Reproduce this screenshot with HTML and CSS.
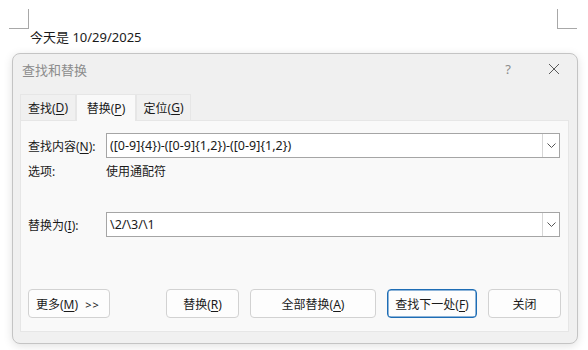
FILE: index.html
```html
<!DOCTYPE html>
<html lang="zh">
<head>
<meta charset="utf-8">
<link rel="stylesheet" href="styles.css">
</head>
<body>
<div class="doc">
  <div class="marks">
    <div class="mark mark-left"></div>
    <div class="mark mark-right"></div>
  </div>
  <div class="doc-text">今天是 10/29/2025</div>
</div>
<div class="dialog">
  <div class="titlebar">
    <span class="title">查找和替换</span>
    <span class="help">?</span>
    <span class="close">
      <svg width="12" height="12" viewBox="0 0 12 12"><path d="M1 1L11 11M11 1L1 11" stroke="#5a5a5a" stroke-width="1" fill="none"/></svg>
    </span>
  </div>
  <div class="tabs">
    <div class="tab t1">查找(<u>D</u>)</div>
    <div class="tab active">替换(<u>P</u>)</div>
    <div class="tab t3">定位(<u>G</u>)</div>
  </div>
  <div class="panel">
    <div class="row">
      <span class="label">查找内容(<u>N</u>):</span>
      <div class="combo">
        <span class="combo-text">([0-9]{4})-([0-9]{1,2})-([0-9]{1,2})</span>
        <span class="combo-btn"><svg width="9" height="5" viewBox="0 0 9 5"><path d="M0.5 0.5L4.5 4.5L8.5 0.5" stroke="#555" fill="none"/></svg></span>
      </div>
    </div>
    <div class="row opts">
      <span class="label">选项:</span>
      <span class="opt-val">使用通配符</span>
    </div>
    <div class="row replace">
      <span class="label">替换为(<u>I</u>):</span>
      <div class="combo">
        <span class="combo-text">\2/\3/\1</span>
        <span class="combo-btn"><svg width="9" height="5" viewBox="0 0 9 5"><path d="M0.5 0.5L4.5 4.5L8.5 0.5" stroke="#555" fill="none"/></svg></span>
      </div>
    </div>
    <div class="buttons">
      <button class="btn more">更多(<u>M</u>) <span class="arrows">&gt;&gt;</span></button>
      <div class="spacer"></div>
      <button class="btn w73">替换(<u>R</u>)</button>
      <button class="btn w126">全部替换(<u>A</u>)</button>
      <button class="btn w90 default">查找下一处(<u>F</u>)</button>
      <button class="btn w73">关闭</button>
    </div>
  </div>
</div>
</body>
</html>
```
FILE: styles.css
```css
* { box-sizing: border-box; }
body {
  margin: 0;
  background: #ffffff;
  font-family: "Noto Sans", "Noto Sans CJK SC", sans-serif;
  color: #1a1a1a;
  width: 588px;
  height: 350px;
  overflow: hidden;
}
u { text-decoration: underline; text-underline-offset: 2px; text-decoration-thickness: 1px; }
.doc { padding: 9px 0 0 9px; height: 53px; }
.marks { display: flex; justify-content: space-between; width: 568px; }
.mark { width: 20px; height: 20px; }
.mark-left { border-right: 1px solid #a8a8a8; border-bottom: 1px solid #a8a8a8; }
.mark-right { margin-left: auto; border-left: 1px solid #a8a8a8; border-bottom: 1px solid #a8a8a8; }
.doc-text { font-size: 13px; line-height: 18px; margin: 0 0 0 21px; position: relative; top: -1px; }
.dialog {
  margin-left: 12px;
  width: 566px;
  height: 291px;
  background: #f0f0f0;
  border: 1px solid #c4c4c4;
  border-radius: 8px;
  box-shadow: 0 2px 10px rgba(0,0,0,0.12);
  display: flex;
  flex-direction: column;
}
.titlebar {
  height: 30px;
  display: flex;
  align-items: center;
  padding: 0 0 0 9px;
  font-size: 13px;
}
.title { color: #8c8c8c; flex: 1; }
.help { color: #8c8c8c; font-size: 13px; width: 46px; text-align: center; }
.close { width: 46px; display: flex; justify-content: center; align-items: center; }
.tabs {
  display: flex;
  align-items: flex-end;
  margin: 8px 0 0 7px;
  height: 28px;
  font-size: 12px;
}
.tab {
  height: 26px;
  padding: 0;
  white-space: nowrap;
  display: flex;
  align-items: center;
  justify-content: center;
  background: #f0f0f0;
  border: 1px solid #e6e6e6;
  border-bottom: none;
}
.t1 { width: 56px; }
.tab.active {
  height: 27px;
  width: 60px;
  background: #f9f9f9;
  border-color: #e6e6e6;
  position: relative;
  top: 1px;
  z-index: 1;
}
.t3 { width: 55px; }
.panel {
  margin: 0 8px 0 7px;
  height: 212px;
  background: #f9f9f9;
  border: 1px solid #e6e6e6;
  padding: 12px 7px 0 7px;
  font-size: 12px;
  display: flex;
  flex-direction: column;
}
.row { display: flex; align-items: center; }
.label { width: 78px; flex: none; }
.combo {
  width: 454px;
  height: 25px;
  background: #ffffff;
  border: 1px solid #a5a5a5;
  display: flex;
  align-items: center;
}
.combo-text { flex: 1; padding-left: 3px; font-size: 12.5px; white-space: nowrap; }
.combo-btn {
  width: 17px;
  height: 23px;
  border-left: 1px solid #d6d6d6;
  display: flex;
  align-items: center;
  justify-content: center;
}
.opts { margin-top: 5px; height: 16px; }
.opt-val { color: #1a1a1a; }
.replace { margin-top: 33px; }
.buttons {
  display: flex;
  margin-top: 52px;
  gap: 11px;
}
.spacer { flex: 1; }
.btn {
  height: 29px;
  background: #fdfdfd;
  border: 1px solid #d2d2d2;
  border-radius: 4px;
  font-family: inherit;
  font-size: 12px;
  color: #1a1a1a;
  padding: 0;
  white-space: nowrap;
}
.more { width: 82px; text-align: left; padding-left: 7px; }
.arrows { margin-left: 4px; font-size: 11px; letter-spacing: 1px; }
.w73 { width: 73px; }
.w126 { width: 126px; }
.w90 { width: 90px; }
.default { border: 1px solid #1e6db5; box-shadow: inset 0 0 0 0.5px #1e6db5; }
```
